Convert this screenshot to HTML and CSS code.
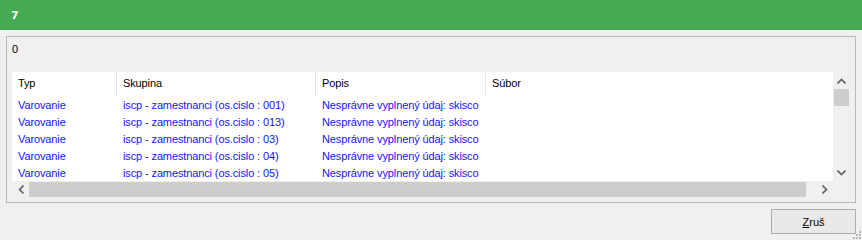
FILE: index.html
```html
<!DOCTYPE html>
<html>
<head>
<meta charset="utf-8">
<link rel="stylesheet" href="styles.css">
</head>
<body>
<div class="titlebar"><span class="title">7</span></div>
<div class="content">
  <div class="group">
    <div class="count">0</div>
    <div class="list">
      <div class="list-main">
        <div class="viewport">
          <div class="row head">
            <div class="cell c1">Typ</div>
            <div class="cell c2">Skupina</div>
            <div class="cell c3">Popis</div>
            <div class="cell c4">Súbor</div>
          </div>
          <div class="row item">
            <div class="cell c1">Varovanie</div>
            <div class="cell c2">iscp - zamestnanci (os.cislo : 001)</div>
            <div class="cell c3">Nesprávne vyplnený údaj: skisco</div>
            <div class="cell c4"></div>
          </div>
          <div class="row item">
            <div class="cell c1">Varovanie</div>
            <div class="cell c2">iscp - zamestnanci (os.cislo : 013)</div>
            <div class="cell c3">Nesprávne vyplnený údaj: skisco</div>
            <div class="cell c4"></div>
          </div>
          <div class="row item">
            <div class="cell c1">Varovanie</div>
            <div class="cell c2">iscp - zamestnanci (os.cislo : 03)</div>
            <div class="cell c3">Nesprávne vyplnený údaj: skisco</div>
            <div class="cell c4"></div>
          </div>
          <div class="row item">
            <div class="cell c1">Varovanie</div>
            <div class="cell c2">iscp - zamestnanci (os.cislo : 04)</div>
            <div class="cell c3">Nesprávne vyplnený údaj: skisco</div>
            <div class="cell c4"></div>
          </div>
          <div class="row item">
            <div class="cell c1">Varovanie</div>
            <div class="cell c2">iscp - zamestnanci (os.cislo : 05)</div>
            <div class="cell c3">Nesprávne vyplnený údaj: skisco</div>
            <div class="cell c4"></div>
          </div>
        </div>
        <div class="vscroll">
          <div class="sbtn"><svg width="9" height="6" viewBox="0 0 9 6"><path d="M0.5 5.5 L4.5 1.5 L8.5 5.5" fill="none" stroke="#606060" stroke-width="1.6"/></svg></div>
          <div class="vthumb"></div>
          <div class="vtrack"></div>
          <div class="sbtn"><svg width="9" height="6" viewBox="0 0 9 6"><path d="M0.5 0.5 L4.5 4.5 L8.5 0.5" fill="none" stroke="#606060" stroke-width="1.6"/></svg></div>
        </div>
      </div>
      <div class="hscroll">
        <div class="sbtn"><svg width="6" height="9" viewBox="0 0 6 9"><path d="M5.5 0.5 L1.5 4.5 L5.5 8.5" fill="none" stroke="#606060" stroke-width="1.6"/></svg></div>
        <div class="hthumb"></div>
        <div class="htrack"></div>
        <div class="sbtn"><svg width="6" height="9" viewBox="0 0 6 9"><path d="M0.5 0.5 L4.5 4.5 L0.5 8.5" fill="none" stroke="#606060" stroke-width="1.6"/></svg></div>
        <div class="corner"></div>
      </div>
    </div>
  </div>
  <div class="footer">
    <button class="btn"><u>Z</u>ruš</button>
  </div>
</div>
<div class="grip">
  <span></span><span></span><span></span><span></span><span></span><span></span>
</div>
</body>
</html>
```

FILE: styles.css
```css
html, body {
  margin: 0;
  padding: 0;
}
body {
  width: 862px;
  height: 240px;
  background: #f0f0f0;
  font-family: "Liberation Sans", "DejaVu Sans", sans-serif;
  font-size: 11px;
  color: #000;
  position: relative;
  overflow: hidden;
}
.titlebar {
  height: 30px;
  background: #46aa52;
  display: flex;
  align-items: center;
  padding-left: 11px;
}
.title {
  color: #fff;
  font-family: "DejaVu Sans", sans-serif;
  font-weight: bold;
  font-size: 11px;
}
.content {
  padding: 6px 6px 0 6px;
}
.group {
  width: 850px;
  height: 167px;
  box-sizing: border-box;
  border: 1px solid #b9b9b9;
  padding: 0 5px 0 5px;
  display: flex;
  flex-direction: column;
}
.count {
  height: 35px;
  padding-top: 6px;
  box-sizing: border-box;
  line-height: 13px;
}
.list {
  width: 838px;
  height: 126px;
  display: flex;
  flex-direction: column;
}
.list-main {
  display: flex;
  height: 109px;
}
.viewport {
  flex: 1;
  background: #fff;
  overflow: hidden;
}
.row {
  display: flex;
}
.head {
  height: 25px;
  align-items: flex-start;
}
.head .cell {
  height: 24px;
  line-height: 23px;
  border-right: 1px solid #e5e5e5;
  color: #000;
}
.head .c4 {
  border-right: none;
}
.item {
  height: 17px;
  line-height: 17px;
  color: #1414ff;
}
.cell {
  box-sizing: border-box;
  padding-left: 6px;
  white-space: nowrap;
  flex: none;
  letter-spacing: -0.12px;
}
.c1 { width: 105px; }
.c2 { width: 199px; }
.c3 { width: 170px; }
.c4 { flex: 1; }
.item .cell { border-right: 1px solid transparent; }

.vscroll {
  width: 17px;
  background: #f0f0f0;
  display: flex;
  flex-direction: column;
}
.sbtn {
  width: 17px;
  height: 17px;
  flex: none;
  display: flex;
  align-items: center;
  justify-content: center;
}
.vthumb {
  height: 17px;
  background: #cdcdcd;
  margin: 0 1px;
}
.vtrack { flex: 1; }
.hscroll {
  height: 17px;
  display: flex;
  background: #f0f0f0;
}
.hthumb {
  width: 777px;
  background: #cdcdcd;
  margin: 1px 0;
}
.htrack { flex: 1; }
.corner {
  width: 17px;
  background: #f0f0f0;
}
.footer {
  display: flex;
  justify-content: flex-end;
  padding-top: 6px;
}
.btn {
  width: 85px;
  height: 25px;
  border: 1px solid #adadad;
  background: #e9e9e9;
  font-family: "Liberation Sans", "DejaVu Sans", sans-serif;
  font-size: 11px;
  color: #000;
  padding: 0;
  margin-right: 0;
}
.grip {
  position: absolute;
  right: 1px;
  bottom: 1px;
  width: 8px;
  height: 8px;
}
.grip span {
  position: absolute;
  width: 2px;
  height: 2px;
  background: #b8b8b8;
}
.grip span:nth-child(1) { right: 0; bottom: 0; }
.grip span:nth-child(2) { right: 3px; bottom: 0; }
.grip span:nth-child(3) { right: 6px; bottom: 0; }
.grip span:nth-child(4) { right: 0; bottom: 3px; }
.grip span:nth-child(5) { right: 3px; bottom: 3px; }
.grip span:nth-child(6) { right: 0; bottom: 6px; }
```
